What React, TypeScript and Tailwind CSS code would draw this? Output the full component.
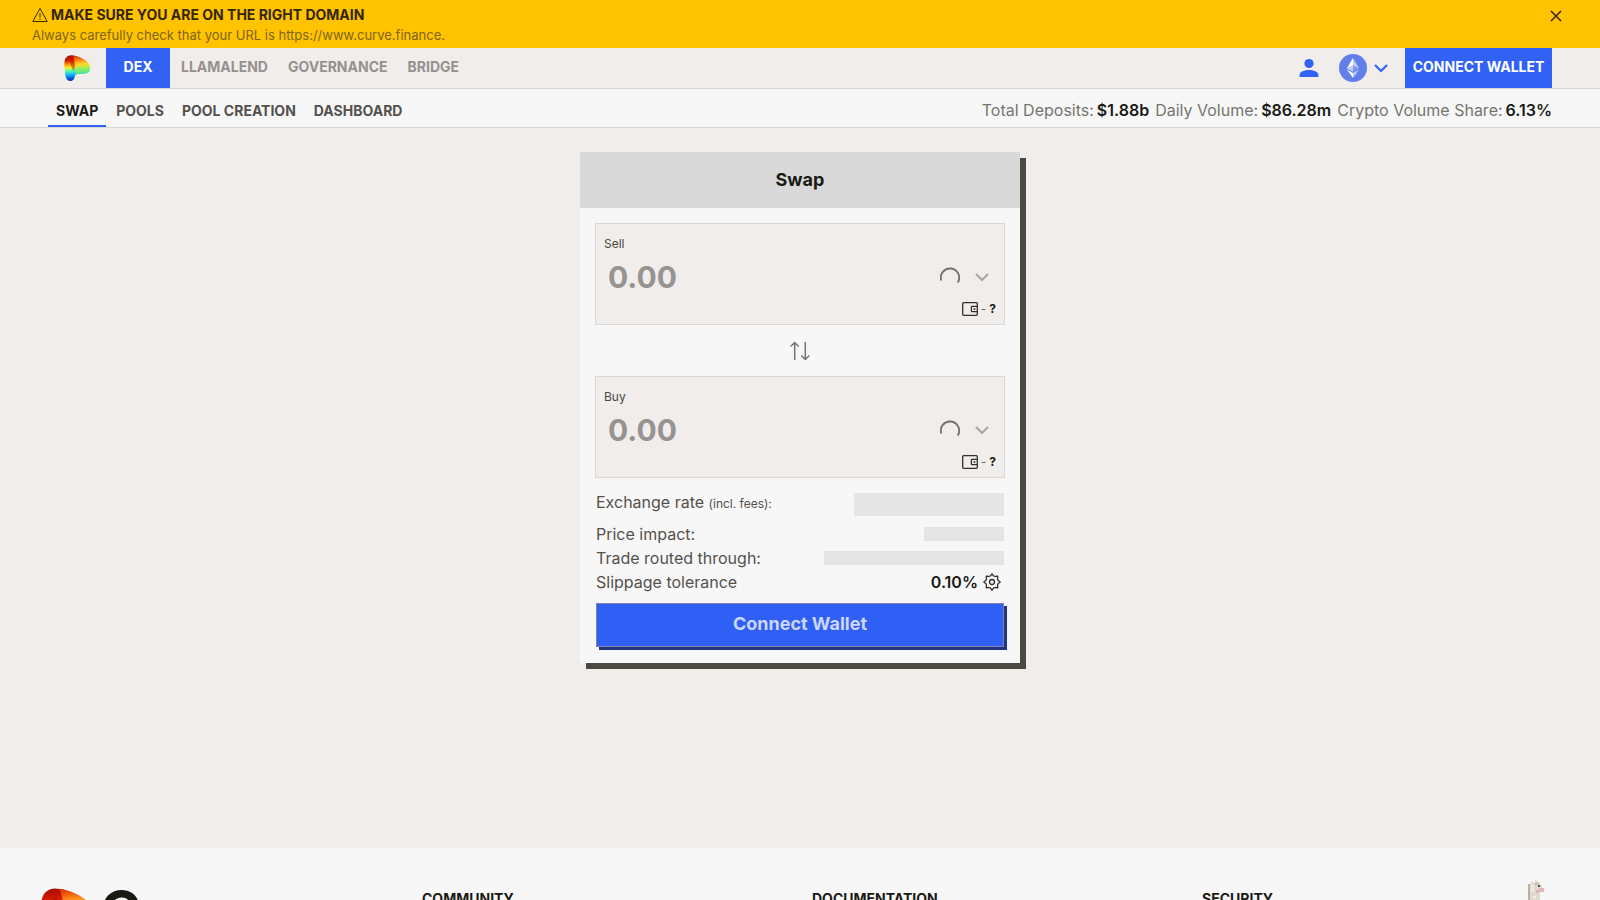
import type { ReactNode } from "react";

interface AmountFieldProps {
  id: string;
  label: string;
}

const appLinks = ["LLAMALEND", "GOVERNANCE", "BRIDGE"];
const pageLinks = ["POOLS", "POOL CREATION", "DASHBOARD"];

const stats = [
  { label: "Total Deposits:", value: "$1.88b" },
  { label: "Daily Volume:", value: "$86.28m" },
  { label: "Crypto Volume Share:", value: "6.13%" },
];

const CurveLogo = ({ id, className }: { id: string; className: string }) => (
  <svg viewBox="0 0 26 26" className={className} aria-hidden="true">
    <defs>
      <linearGradient id={`${id}-body`} x1="0.15" y1="0" x2="0.25" y2="1">
        <stop offset="0" stopColor="#a00d00" />
        <stop offset="0.2" stopColor="#d81800" />
        <stop offset="0.36" stopColor="#ff9a00" />
        <stop offset="0.48" stopColor="#f4f02c" />
        <stop offset="0.62" stopColor="#50f5b0" />
        <stop offset="0.76" stopColor="#10b4ff" />
        <stop offset="1" stopColor="#0018b0" />
      </linearGradient>
      <linearGradient id={`${id}-wing`} x1="0" y1="0" x2="0.15" y2="1">
        <stop offset="0" stopColor="#e02800" />
        <stop offset="0.3" stopColor="#ff8c1a" />
        <stop offset="0.52" stopColor="#ffd52a" />
        <stop offset="0.75" stopColor="#b0f040" />
        <stop offset="1" stopColor="#4be88f" />
      </linearGradient>
    </defs>
    <path
      d="M.5 7C1 2.500 3.500.3 7 .2 13 .5 19.500 3.500 23.500 7.500 27 11 26.500 17 23 18c-4 1-8.500.5-11.500 1.500-1 2-1 6.500-5 6.500C3 26 1.500 23 1.200 19 .8 15 .2 11 .5 7Z"
      fill={`url(#${id}-body)`}
    />
    <path
      d="M9 .4C15 1.300 20 4.300 23.500 7.500 27 11 26.500 17 23 18c-4 1-8 .5-11 1.200C11 13 12 8 9 .4Z"
      fill={`url(#${id}-wing)`}
    />
    <path d="M6 4.500C8 4 10.500 7 11 11l-1 5C8 14 6 9 6 4.500Z" fill="#a51000" opacity="0.5" />
    <path d="M12 13c4-1 8 .5 12 0-3 2-8 1.500-12.500 4Z" fill="#5ff0a0" opacity="0.6" />
  </svg>
);

const WarningIcon = () => (
  <svg viewBox="0 0 16 16" className="size-4" fill="none" stroke="#3a2c00" aria-hidden="true">
    <path d="M8 1.500 15.200 14.500H.8Z" strokeLinejoin="round" />
    <path d="M8 6v4.500M8 11.700v1.200" />
  </svg>
);

const ChevronIcon = ({ className }: { className: string }) => (
  <svg viewBox="0 0 14 14" className={className} fill="none" stroke="currentColor" strokeWidth="2.200" aria-hidden="true">
    <path d="m1 4 6 6 6-6" />
  </svg>
);

const EthereumIcon = () => (
  <svg viewBox="0 0 28 28" className="size-7" aria-hidden="true">
    <circle cx="14" cy="14" r="14" fill="#627eea" />
    <path d="M14 4v7.500l6.200 2.900Z" fill="#fff" fillOpacity="0.6" />
    <path d="M14 4 7.800 14.400 14 11.500Z" fill="#fff" />
    <path d="M14 18.900V24l6.200-8.600Z" fill="#fff" fillOpacity="0.6" />
    <path d="M14 24v-5.100l-6.200-3.500Z" fill="#fff" />
    <path d="m14 17.800 6.200-3.400L14 11.500Z" fill="#fff" fillOpacity="0.2" />
    <path d="m7.800 14.400 6.200 3.400v-6.300Z" fill="#fff" fillOpacity="0.6" />
  </svg>
);

const WalletIcon = () => (
  <svg viewBox="0 0 16 14" className="h-3.5 w-4" fill="none" stroke="#33302c" strokeWidth="1.300" aria-hidden="true">
    <rect x="0.700" y="0.700" width="14.600" height="12.600" rx="1" />
    <path d="M15.300 4.300H10a.6.6 0 0 0-.6.6v4.200a.6.6 0 0 0 .6.6h5.300" />
    <rect x="11.600" y="6.200" width="1.700" height="1.700" fill="#33302c" stroke="none" />
  </svg>
);

const GearIcon = () => (
  <svg viewBox="0 0 18 18" className="size-[18px]" fill="none" stroke="#33302c" strokeWidth="1.300" strokeLinejoin="round" aria-hidden="true">
    <path d="M7.300 3 9 .8 10.700 3l1.300.5 2.800-.3-.3 2.800.5 1.300L17.200 9 15 10.700l-.5 1.300.3 2.800-2.800-.3-1.300.5L9 17.200 7.300 15 6 14.500l-2.800.3.300-2.800L3 10.700.8 9 3 7.300 3.500 6l-.3-2.800 2.800.3Z" />
    <circle cx="9" cy="9" r="2.500" />
  </svg>
);

const Llama = () => (
  <svg viewBox="0 0 16 40" className="h-10 w-4" aria-hidden="true">
    <path d="M0 4h3V1h2v2h2V0h2v2h3v3h2v7h-2v28H0Z" fill="#dedace" />
    <path d="M0 4h2v36H0Z" fill="#b9b39e" />
    <path d="M3 5h3v7H3ZM5 16h3v3H5Z" fill="#ece9e0" />
    <path d="M7 3h3v2H7Z" fill="#bdb7a3" />
    <path d="M10 5h2v2h-2Z" fill="#5a4843" />
    <path d="M11 8h5v4h-5Z" fill="#e9b4b6" />
    <path d="M8 10h3v3H8Z" fill="#d9b9b0" />
  </svg>
);

const AmountField = ({ id, label }: AmountFieldProps) => (
  <div className="border border-[#d9d8d7] bg-[#f0edeb] px-2 pt-3 pb-2">
    <label htmlFor={id} className="block text-xs leading-4 text-[#4b4843]">
      {label}
    </label>
    <div className="flex h-[50px] items-center justify-between">
      <input
        id={id}
        type="text"
        placeholder="0.00"
        className="w-60 bg-transparent pl-1 text-3xl leading-10 font-bold outline-none placeholder:text-[#979391]"
      />
      <button type="button" aria-label={`Select ${label} token`} className="mr-[7px] flex items-center gap-[15px]">
        <svg viewBox="0 0 20 20" className="size-5" fill="none" stroke="#76726e" strokeWidth="1.900" aria-hidden="true">
          <path d="M1.200 13.500A9.200 9.200 0 1 1 17.800 15.500" />
        </svg>
        <ChevronIcon className="size-3.5 text-[#aaa7a5]" />
      </button>
    </div>
    <div className="flex items-center justify-end gap-[3px] text-xs leading-3 text-[#6b6863]">
      <WalletIcon />
      <span>-</span>
      <strong className="text-[#1a1914]">?</strong>
    </div>
  </div>
);

const DetailRow = ({ label, children }: { label: ReactNode; children: ReactNode }) => (
  <div className="flex h-6 items-center justify-between">
    <span>{label}</span>
    {children}
  </div>
);

const App = () => {
  return (
    <div className="flex h-screen flex-col overflow-hidden bg-[#f0edeb] font-['Inter',sans-serif] text-[#1a1914]">
      <div className="flex h-12 shrink-0 items-start justify-between bg-[#ffc300] pr-8 pl-8">
        <div className="pt-[5px]">
          <p className="flex items-center gap-[3px] text-sm leading-5 font-bold text-[#35260b]">
            <WarningIcon />
            MAKE SURE YOU ARE ON THE RIGHT DOMAIN
          </p>
          <p className="text-[13px] leading-5 text-[#80651a]">
            Always carefully check that your URL is https://www.curve.finance.
          </p>
        </div>
        <button type="button" aria-label="Close" className="p-1 pt-2">
          <svg viewBox="0 0 16 16" className="size-4" stroke="#35260b" strokeWidth="1.500" aria-hidden="true">
            <path d="m3 3 10 10M13 3 3 13" />
          </svg>
        </button>
      </div>

      <header className="shrink-0">
        <div className="flex h-[41px] items-stretch justify-between border-b border-[#d9d8d7] px-12">
          <nav className="flex items-stretch text-sm font-bold text-[#96918d]">
            <a href="#" aria-label="Curve" className="flex items-center px-4">
              <CurveLogo id="nav-logo" className="size-[26px]" />
            </a>
            <a href="#" className="flex w-16 items-center justify-center bg-[#3162f4] pb-0.5 text-white">
              DEX
            </a>
            <div className="flex items-center gap-5 pb-0.5 pl-[11px]">
              {appLinks.map((link) => (
                <a key={link} href="#">{link}</a>
              ))}
            </div>
          </nav>
          <div className="flex items-center text-[#3162f4]">
            <button type="button" aria-label="Profile" className="mr-5">
              <svg viewBox="0 0 20 20" className="size-5" fill="currentColor" aria-hidden="true">
                <circle cx="10" cy="5.500" r="4.600" />
                <path d="M.6 19v-2.200C.6 13.500 6 12 10 12s9.400 1.500 9.400 4.800V19Z" />
              </svg>
            </button>
            <button type="button" aria-label="Ethereum network" className="mr-[17px] flex items-center gap-[7px]">
              <EthereumIcon />
              <ChevronIcon className="size-3.5" />
            </button>
            <button type="button" className="w-[147px] self-stretch bg-[#3162f4] pb-0.5 text-sm font-bold whitespace-nowrap text-white">
              CONNECT WALLET
            </button>
          </div>
        </div>

        <div className="flex h-[39px] items-stretch justify-between border-b border-[#d9d8d7] bg-[#f7f7f7] px-12">
          <nav className="flex items-stretch gap-0.5 text-sm font-bold text-[#54514d]">
            <a href="#" className="flex items-center border-b-2 border-[#3162f4] px-2 pt-2 text-[#1a1914]">
              SWAP
            </a>
            {pageLinks.map((link) => (
              <a key={link} href="#" className="flex items-center px-2 pt-1.5">{link}</a>
            ))}
          </nav>
          <div className="flex items-center gap-1.5 pt-1 text-base text-[#76746f]">
            {stats.map(({ label, value }) => (
              <p key={label} className="flex gap-[3px]">
                {label}
                <strong className="font-semibold text-[#1a1914]">{value}</strong>
              </p>
            ))}
          </div>
        </div>
      </header>

      <main className="flex min-h-[720px] shrink-0 items-start justify-center pt-6">
        <section className="w-[440px] bg-[#f7f7f7] shadow-[6px_6px_0_#4b4941]">
          <h1 className="flex h-14 items-center justify-center bg-[#d9d9d9] text-lg font-bold">
            Swap
          </h1>
          <form className="px-[15px] pt-[15px] pb-4">
            <AmountField id="sell" label="Sell" />
            <div className="flex h-[51px] items-center justify-center">
              <button type="button" aria-label="Switch tokens">
                <svg viewBox="0 0 20 20" className="size-5" fill="none" stroke="#76726e" strokeWidth="1.500" aria-hidden="true">
                  <path d="M4.700 19V1.500M.7 5.500l4-4 4 4M15.300 1v17.500M11.300 14.500l4 4 4-4" />
                </svg>
              </button>
            </div>
            <AmountField id="buy" label="Buy" />
            <div className="px-px pt-3 text-base leading-6 text-[#54514d]">
              <div className="flex h-8 items-start justify-between">
                <span>
                  Exchange rate <small className="text-xs">(incl. fees):</small>
                </span>
                <span className="mt-[3px] h-[23px] w-[150px] bg-[#e5e5e5]" />
              </div>
              <DetailRow label="Price impact:">
                <span className="h-3.5 w-20 bg-[#e5e5e5]" />
              </DetailRow>
              <DetailRow label="Trade routed through:">
                <span className="h-3.5 w-[180px] bg-[#e5e5e5]" />
              </DetailRow>
              <DetailRow label="Slippage tolerance">
                <button type="button" className="flex items-center gap-[5px] pr-[3px] font-semibold text-[#1a1914]">
                  0.10%
                  <GearIcon />
                </button>
              </DetailRow>
              <button
                type="button"
                className="mt-[9px] flex h-11 w-full items-center justify-center border border-[#7b83ac] bg-[#2f5ff4] pb-0.5 text-lg font-bold text-[#cbd7fc] shadow-[3px_3px_0_#25347f]"
              >
                Connect Wallet
              </button>
            </div>
          </form>
        </section>
      </main>

      <footer className="grid shrink-0 grid-cols-4 gap-6 bg-[#f7f7f7] px-8 pt-8">
        <div className="flex gap-1 pt-2 pl-2">
          <CurveLogo id="footer-logo" className="size-14" />
          <span className="text-[56px] leading-[48px] font-bold">C</span>
        </div>
        <h2 className="pt-2 text-sm leading-[22px] font-bold">COMMUNITY</h2>
        <h2 className="pt-2 text-sm leading-[22px] font-bold">DOCUMENTATION</h2>
        <div className="flex justify-between">
          <h2 className="pt-2 text-sm leading-[22px] font-bold">SECURITY</h2>
          <div className="pr-6">
            <Llama />
          </div>
        </div>
      </footer>
    </div>
  );
};

export default App;
